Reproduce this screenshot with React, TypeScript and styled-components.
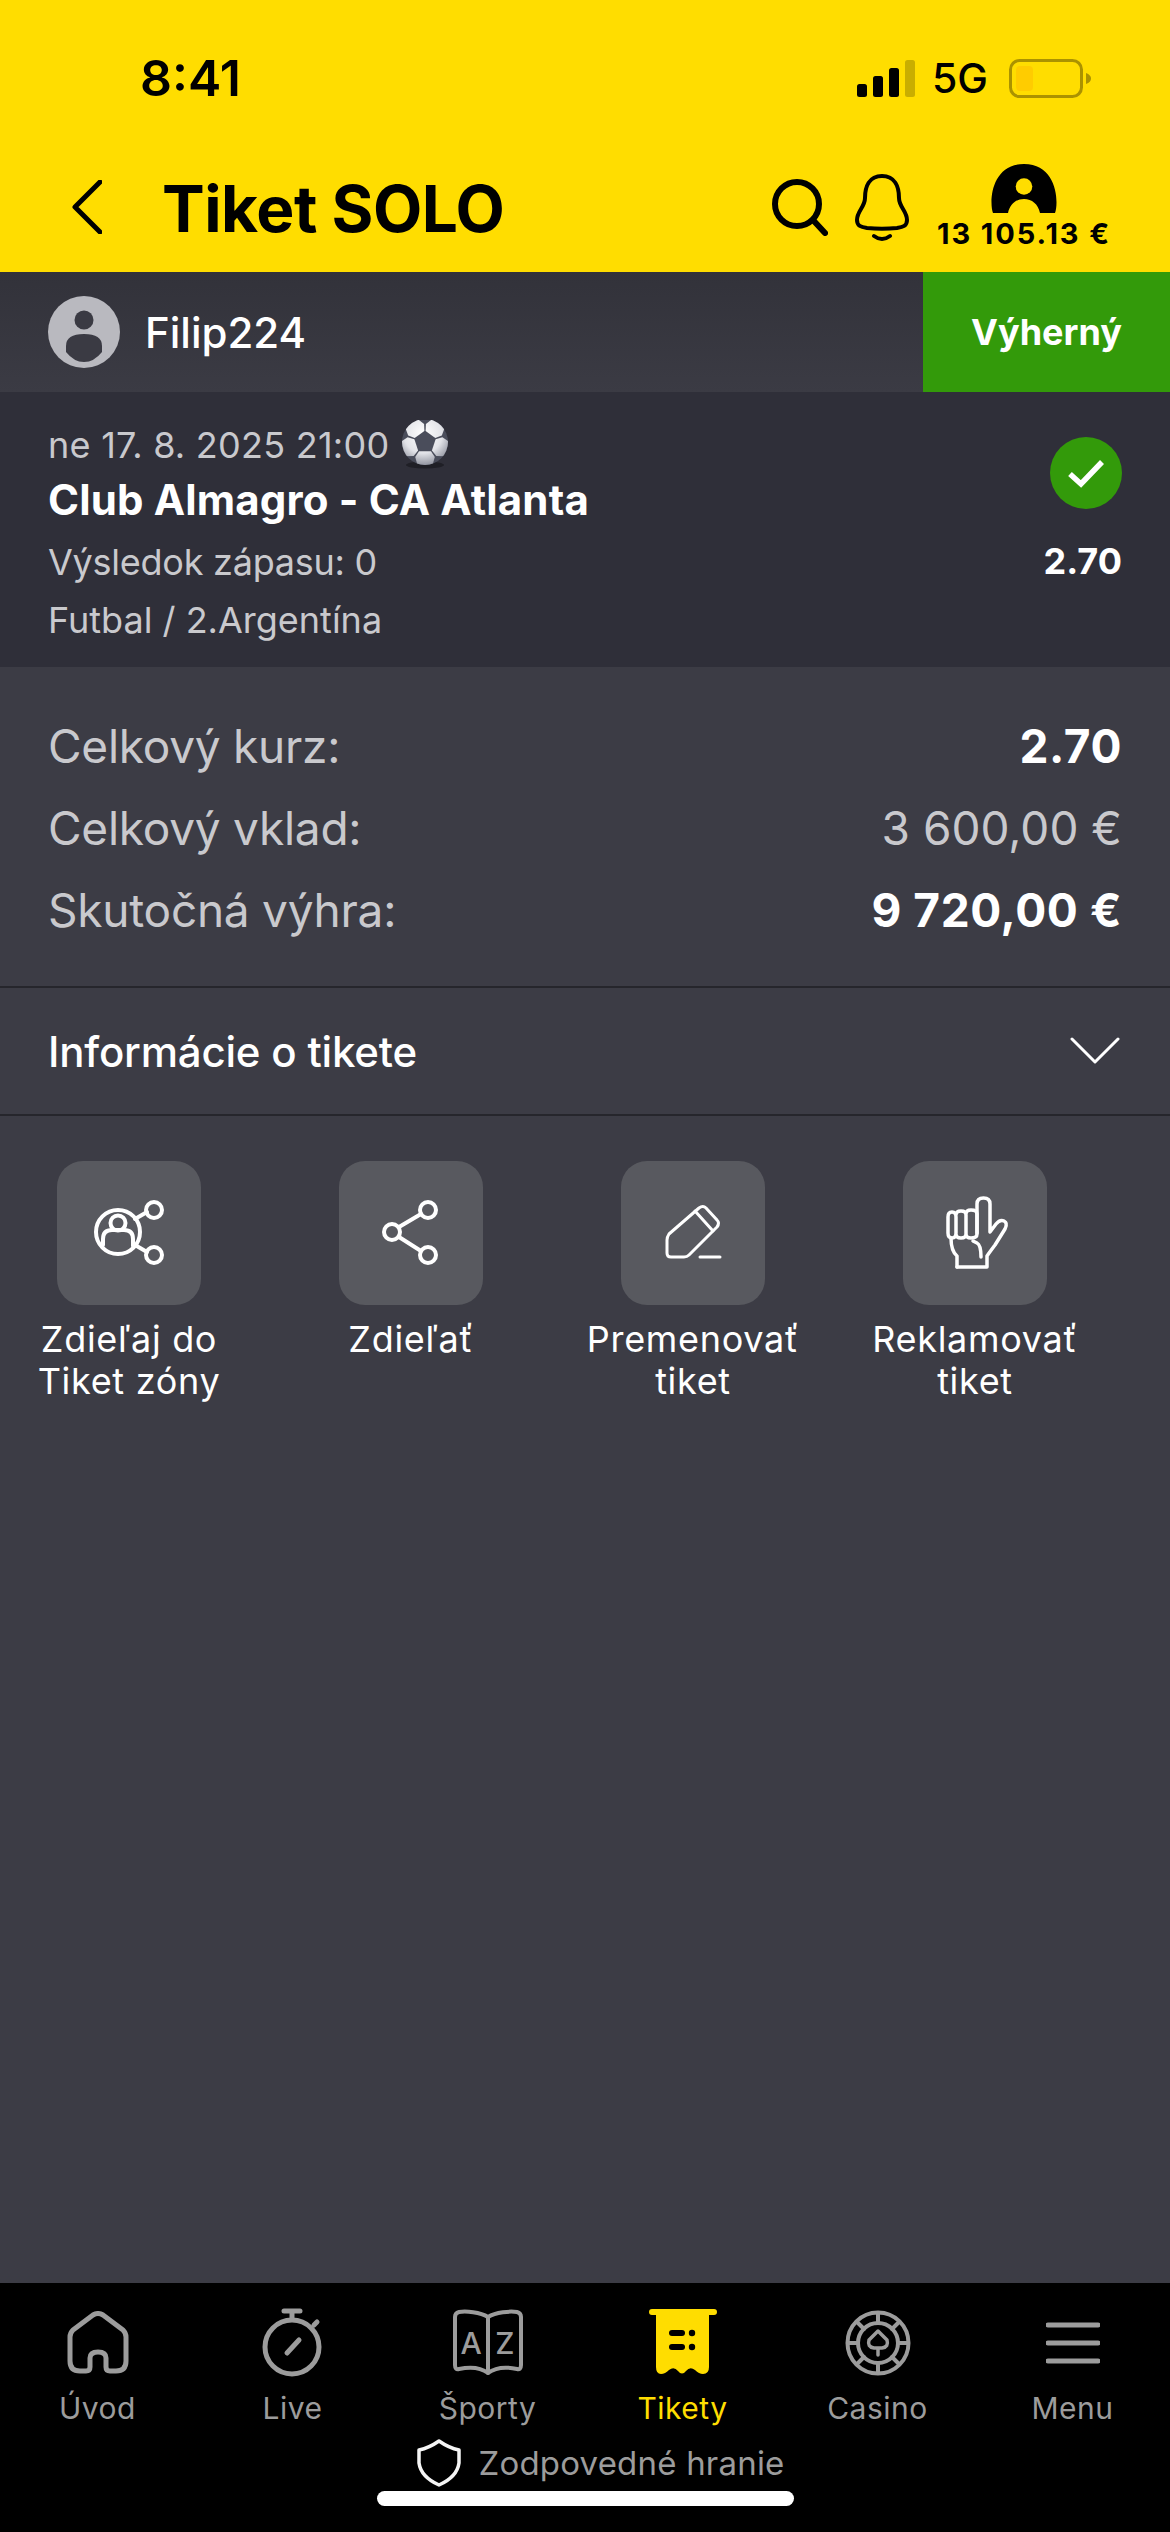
import React from 'react';
import styled, { createGlobalStyle } from 'styled-components';

const GlobalStyle = createGlobalStyle`
  html, body { margin: 0; padding: 0; background: #3c3c45; }
  * { box-sizing: border-box; }
  body { font-family: Inter, "Noto Sans", sans-serif; }
`;

const Page = styled.div`
  width: 1170px;
  height: 2532px;
  display: flex;
  flex-direction: column;
  background: #3c3c45;
  overflow: hidden;
`;

const Top = styled.header`
  height: 272px;
  background: #ffdd00;
  display: flex;
  flex-direction: column;
  color: #000;
`;

const StatusBar = styled.div`
  height: 156px;
  display: flex;
  align-items: flex-start;
  justify-content: space-between;
  padding: 48px 79px 0 140px;
`;

const Clock = styled.span`
  font-size: 50px;
  font-weight: 600;
  line-height: 60px;
`;

const StatusRight = styled.div`
  display: flex;
  align-items: center;
  gap: 21px;
  height: 60px;
`;

const NetLabel = styled.span`
  margin-left: -4px;
  font-size: 41px;
  font-weight: 500;
  line-height: 60px;
`;

const NavBar = styled.div`
  flex: 1;
  display: flex;
  align-items: flex-start;
  padding-left: 72px;
`;

const BackButton = styled.div`
  width: 90px;
  height: 60px;
  margin-top: 24px;
`;

const Title = styled.h1`
  margin: 15px 0 0;
  flex: 1;
  font-size: 64px;
  line-height: 76px;
  font-weight: 700;
  letter-spacing: -0.5px;
`;

const NavIcon = styled.div<{ $mr: number; $mt: number }>`
  margin-right: ${p => p.$mr}px;
  margin-top: ${p => p.$mt}px;
  display: flex;
`;

const Balance = styled.div`
  width: 172px;
  margin: 8px 60px 0 0;
  display: flex;
  flex-direction: column;
  align-items: center;
`;

const BalanceText = styled.span`
  font-size: 29px;
  font-weight: 700;
  line-height: 36px;
  letter-spacing: 1.9px;
  white-space: nowrap;
  margin-top: 3px;
`;

const UserRow = styled.div`
  height: 120px;
  display: flex;
  align-items: center;
  background: linear-gradient(#32323a, #3b3b44);
  padding-left: 48px;
`;

const UserName = styled.span`
  flex: 1;
  margin-left: 25px;
  font-size: 42px;
  font-weight: 500;
  color: #fff;
`;

const StatusBadge = styled.div`
  width: 247px;
  height: 120px;
  background: #339a0a;
  color: #fff;
  font-size: 36px;
  font-weight: 700;
  display: flex;
  align-items: center;
  justify-content: center;
`;

const MatchCard = styled.section`
  height: 275px;
  background: #2f2f39;
  padding: 24px 48px 0;
  display: flex;
  justify-content: space-between;
`;

const MatchInfo = styled.div`
  display: flex;
  flex-direction: column;
`;

const MatchLine = styled.div<{ $spacing?: number }>`
  display: flex;
  align-items: center;
  gap: 11px;
  font-size: 36px;
  line-height: 58px;
  letter-spacing: ${p => p.$spacing ?? 0}px;
  color: #c9c9cd;
`;

const MatchTitle = styled.div`
  font-size: 42px;
  font-weight: 700;
  line-height: 52px;
  letter-spacing: 0.15px;
  color: #fff;
  margin-bottom: 7px;
`;

const MatchOdds = styled.div`
  display: flex;
  flex-direction: column;
  align-items: flex-end;
  padding-top: 21px;
  color: #fff;
  font-size: 36px;
  font-weight: 700;
`;

const OddsValue = styled.span`
  margin-top: 30px;
`;

const Summary = styled.section`
  height: 321px;
  padding: 38px 48px 0;
  border-bottom: 2px solid #26262c;
`;

const SummaryRow = styled.div`
  height: 82px;
  display: flex;
  align-items: center;
  justify-content: space-between;
  font-size: 46px;
  letter-spacing: -0.25px;
  color: #c9c9cd;
`;

const SummaryValue = styled.span<{ $bold?: boolean }>`
  font-weight: ${p => (p.$bold ? 700 : 400)};
  letter-spacing: ${p => (p.$bold ? 0.6 : 0)}px;
  color: ${p => (p.$bold ? '#fff' : '#c9c9cd')};
`;

const InfoRow = styled.div`
  height: 128px;
  padding: 0 50px 0 48px;
  display: flex;
  align-items: center;
  justify-content: space-between;
  border-bottom: 2px solid #26262c;
  color: #fff;
  font-size: 42px;
  font-weight: 500;
  letter-spacing: -0.2px;
`;

const Actions = styled.div`
  flex: 1;
  display: grid;
  grid-template-columns: repeat(4, 282px);
  align-content: start;
  margin-left: -12px;
  padding-top: 45px;
`;

const Action = styled.div`
  display: flex;
  flex-direction: column;
  align-items: center;
  color: #fff;
  font-size: 36px;
  line-height: 42px;
  letter-spacing: 0.7px;
  text-align: center;
`;

const ActionTile = styled.div`
  width: 144px;
  height: 144px;
  border-radius: 26px;
  background: #58595f;
  margin-bottom: 13px;
  display: flex;
`;

const TabBar = styled.nav`
  height: 249px;
  background: #000;
  display: flex;
  flex-direction: column;
`;

const Tabs = styled.div`
  display: grid;
  grid-template-columns: repeat(6, 195px);
  padding-top: 22px;
`;

const Tab = styled.div<{ $active?: boolean }>`
  display: flex;
  flex-direction: column;
  align-items: center;
  color: ${p => (p.$active ? '#ffdd00' : '#9c9c9c')};
  font-size: 30px;
  line-height: 36px;
  letter-spacing: 0.5px;
`;

const TabIcon = styled.div`
  height: 76px;
  margin-bottom: 9px;
  display: flex;
  align-items: center;
  justify-content: center;
`;

const Responsible = styled.div`
  display: flex;
  align-items: center;
  justify-content: center;
  gap: 17px;
  height: 48px;
  margin-top: 13px;
  padding-left: 32px;
  color: #9c9c9c;
  font-size: 33px;
  letter-spacing: 0.2px;
`;

const HomeIndicator = styled.div`
  width: 417px;
  height: 15px;
  margin: 4px 0 0 377px;
  background: #fff;
  border-radius: 8px;
`;

const SignalIcon = () => (
  <svg width="58" height="37" viewBox="0 0 58 37">
    <rect x="0" y="24" width="10" height="13" rx="2.5" fill="#000" />
    <rect x="16" y="16" width="10" height="21" rx="2.5" fill="#000" />
    <rect x="32" y="8" width="10" height="29" rx="2.5" fill="#000" />
    <rect x="48" y="0" width="10" height="37" rx="2.5" fill="#c9ae00" />
  </svg>
);

const BatteryIcon = () => (
  <svg width="82" height="39" viewBox="0 0 82 39">
    <rect x="1.5" y="1.5" width="71" height="36" rx="9" fill="none" stroke="#ab9200" strokeWidth="3" />
    <rect x="7" y="7" width="17" height="25" rx="4" fill="#ffcc00" />
    <path d="M77 14 Q82 16 82 19.5 Q82 23 77 25 Z" fill="#ab9200" />
  </svg>
);

const BackIcon = () => (
  <svg width="30" height="54" viewBox="0 0 30 54">
    <path d="M28 2 L3 27 L28 52" fill="none" stroke="#000" strokeWidth="5" strokeLinecap="round" strokeLinejoin="round" />
  </svg>
);

const SearchIcon = () => (
  <svg width="56" height="57" viewBox="0 0 56 57">
    <circle cx="25" cy="25" r="22" fill="none" stroke="#000" strokeWidth="6" />
    <path d="M41 41 L53 54" stroke="#000" strokeWidth="6" strokeLinecap="round" />
  </svg>
);

const BellIcon = () => (
  <svg width="54" height="68" viewBox="0 0 54 68">
    <path d="M27 2 C40 2 44 13 44 24 C44 33 52 37 52 46 C52 52 48 53 42 54 C32 55 22 55 12 54 C6 53 2 52 2 46 C2 37 10 33 10 24 C10 13 14 2 27 2 Z" fill="none" stroke="#000" strokeWidth="4" />
    <path d="M19 62 Q27 68 35 62" fill="none" stroke="#000" strokeWidth="4" strokeLinecap="round" />
  </svg>
);

const AccountIcon = () => (
  <svg width="66" height="49" viewBox="0 0 66 49">
    <path d="M2 49 C-2 38 0 0 33 0 C66 0 68 38 64 49 H49 C47 40 41 35 33 35 C25 35 19 40 17 49 Z" fill="#000" />
    <circle cx="33" cy="22.5" r="8.3" fill="#ffdd00" />
  </svg>
);

const UserAvatar = () => (
  <svg width="72" height="72" viewBox="0 0 72 72">
    <circle cx="36" cy="36" r="36" fill="#b9b9bf" />
    <circle cx="36" cy="24" r="9.5" fill="#3a3a43" />
    <path d="M18 54 V50 Q18 38 36 38 Q54 38 54 50 V56 Q46 66 36 66 Q26 66 18 56 Z" fill="#3a3a43" />
  </svg>
);

const ballPoint = (r: number, deg: number) => {
  const a = (deg * Math.PI) / 180;
  return `${(25 + r * Math.cos(a)).toFixed(1)},${(22 + r * Math.sin(a)).toFixed(1)}`;
};

const ballPanel = (m: number) =>
  [ballPoint(11, m - 33), ballPoint(11, m + 33), ballPoint(18, m + 33), ballPoint(25, m + 17), ballPoint(25, m - 17), ballPoint(18, m - 33)].join(' ');

const SoccerBall = () => (
  <svg width="50" height="50" viewBox="0 0 50 50">
    <defs>
      <radialGradient id="ballLight" gradientUnits="userSpaceOnUse" cx="23" cy="14" r="32">
        <stop offset="0%" stopColor="#ffffff" />
        <stop offset="60%" stopColor="#e2e3e8" />
        <stop offset="100%" stopColor="#8d909c" />
      </radialGradient>
      <clipPath id="ballClip">
        <circle cx="25" cy="22" r="23" />
      </clipPath>
    </defs>
    <ellipse cx="25" cy="45" rx="19" ry="3.5" fill="#1f1f26" />
    <circle cx="25" cy="22" r="23" fill="#4a4d5b" />
    <g clipPath="url(#ballClip)">
      {[-54, 18, 90, 162, 234].map(m => (
        <polygon key={m} points={ballPanel(m)} fill="url(#ballLight)" />
      ))}
    </g>
  </svg>
);

const CheckBadge = () => (
  <svg width="72" height="72" viewBox="0 0 72 72">
    <circle cx="36" cy="36" r="36" fill="#339a0a" />
    <path d="M20 37 L31 47 L52 25" fill="none" stroke="#fff" strokeWidth="5.5" />
  </svg>
);

const ChevronDown = () => (
  <svg width="50" height="28" viewBox="0 0 50 28">
    <path d="M2 2 L25 25 L48 2" fill="none" stroke="#fff" strokeWidth="3" strokeLinecap="round" strokeLinejoin="round" />
  </svg>
);

const TileSvg = styled.svg.attrs({ width: 144, height: 144, viewBox: '0 0 144 144' })`
  fill: none;
  stroke: #fff;
  stroke-width: 4;
  stroke-linecap: round;
  stroke-linejoin: round;
`;

const ZoneIcon = () => (
  <TileSvg>
    <circle cx="61" cy="71" r="22" />
    <circle cx="61" cy="62" r="7.5" />
    <path d="M46 84 V78 Q46 69 55 69 H67 Q76 69 76 78 V85" />
    <path d="M78 58 L90 51 M78 84 L90 91" />
    <circle cx="97" cy="49" r="8" />
    <circle cx="97" cy="94" r="8" />
  </TileSvg>
);

const ShareIcon = () => (
  <TileSvg>
    <circle cx="53" cy="71" r="8" />
    <circle cx="89" cy="49" r="8" />
    <circle cx="89" cy="94" r="8" />
    <path d="M60 66 L82 53 M60 76 L82 90" />
  </TileSvg>
);

const RenameIcon = () => (
  <TileSvg>
    <path d="M46 92 V79 Q46 76 48 73 L78 47 Q82 44 85 47 L96 59 Q99 62 96 66 L68 94 Q66 96 63 96 H50 Q46 96 46 92 Z" strokeWidth="3" />
    <path d="M74 50 L92 70" strokeWidth="3" />
    <path d="M79 96 H99" strokeWidth="3" />
  </TileSvg>
);

const ClaimIcon = () => (
  <TileSvg>
    <path d="M54 106 H84 V95 Q86 92 92 84 L102 68 Q105 62 101 60 Q97 58 93 63 L87 71 V43 Q87 37 80.5 37 Q74 37 74 43 V72" strokeWidth="3.5" />
    <path d="M78 96 Q78 84 74 82 L70 80 M54 106 V95 Q48 90 48 77" strokeWidth="3.5" />
    <path d="M45 56 Q45 51 49 51 Q53 51 53 56 V72 Q53 77 49 77 Q45 77 45 72 Z M53 54 Q53 50 58 50 Q63 50 63 54 V73 Q63 77 58 77 Q53 77 53 73 M63 53 Q63 49 68 49 Q74 49 74 53 V73 Q74 77 68 77 Q63 77 63 73" strokeWidth="3.5" />
  </TileSvg>
);

const TabSvg = styled.svg`
  fill: none;
  stroke: #9c9c9c;
  stroke-width: 5;
  stroke-linecap: round;
  stroke-linejoin: round;
`;

const HomeIcon = () => (
  <TabSvg width="62" height="64" viewBox="0 0 62 64">
    <path d="M13 60 H19 Q23 60 23 56 V47 Q23 41 31 41 Q39 41 39 47 V56 Q39 60 43 60 H49 Q59 60 59 50 V26 Q59 22 56 19 L36 4 Q31 1 26 4 L6 19 Q3 22 3 26 V50 Q3 60 13 60 Z" />
  </TabSvg>
);

const LiveIcon = () => (
  <TabSvg width="62" height="70" viewBox="0 0 62 70">
    <circle cx="30" cy="39" r="27" />
    <path d="M30 3 V11 M22 3 H38 M52 17 L55 14 M25 45 L37 32" />
  </TabSvg>
);

const BookLetter = styled.text`
  font-family: Inter, sans-serif;
  font-size: 30px;
  font-weight: 500;
  fill: #9c9c9c;
  stroke: none;
  text-anchor: middle;
`;

const SportsIcon = () => (
  <TabSvg width="72" height="68" viewBox="0 0 72 68">
    <path d="M36 8 C28 3 14 2 7 3 Q3 4 3 8 V56 Q3 61 7 60 C16 58 28 58 36 64 C44 58 56 58 65 60 Q69 61 69 56 V8 Q69 4 65 3 C58 2 44 3 36 8 Z" strokeWidth="4" />
    <path d="M36 8 V64" strokeWidth="4" />
    <BookLetter x="19.5" y="45">A</BookLetter>
    <BookLetter x="53" y="45">Z</BookLetter>
  </TabSvg>
);

const TicketsIcon = () => (
  <svg width="68" height="68" viewBox="0 0 68 68">
    <path d="M3 0 H65 Q68 0 68 3 Q68 6 65 6 H60 V58 Q60 65 54 65 Q50 65 46 61 Q41 57 37 62 Q33 67 29 62 Q25 57 20 61 Q16 65 12 65 Q7 65 7 58 V6 H3 Q0 6 0 3 Q0 0 3 0 Z" fill="#ffdd00" />
    <rect x="20" y="21" width="16" height="6" rx="3" fill="#000" />
    <rect x="20" y="35" width="16" height="6" rx="3" fill="#000" />
    <circle cx="43" cy="24" r="3.2" fill="#000" />
    <circle cx="43" cy="38" r="3.2" fill="#000" />
  </svg>
);

const CasinoIcon = () => (
  <TabSvg width="66" height="66" viewBox="0 0 66 66">
    <circle cx="33" cy="33" r="30.5" strokeWidth="4" />
    <circle cx="33" cy="33" r="20" strokeWidth="4" />
    <path d="M33 3 V13 M33 53 V63 M3 33 H13 M53 33 H63 M12 12 L19 19 M54 12 L47 19 M12 54 L19 47 M54 54 L47 47" strokeWidth="4" />
    <path d="M33 21 L42 30 Q44 37 37 38 H29 Q22 37 24 30 Z M33 38 V45" strokeWidth="3.5" />
  </TabSvg>
);

const MenuIcon = () => (
  <TabSvg width="54" height="42" viewBox="0 0 54 42">
    <path d="M2 3 H52 M2 21 H52 M2 39 H52" />
  </TabSvg>
);

const ShieldIcon = () => (
  <svg width="44" height="48" viewBox="0 0 44 48">
    <path d="M22 2 Q32 9 42 11 V24 Q40 38 22 46 Q4 38 2 24 V11 Q12 9 22 2 Z" fill="none" stroke="#f5f5f5" strokeWidth="3.5" strokeLinejoin="round" />
  </svg>
);

const actions = [
  { icon: <ZoneIcon />, label: ['Zdieľaj do', 'Tiket zóny'] },
  { icon: <ShareIcon />, label: ['Zdieľať'] },
  { icon: <RenameIcon />, label: ['Premenovať', 'tiket'] },
  { icon: <ClaimIcon />, label: ['Reklamovať', 'tiket'] },
];

const tabs = [
  { icon: <HomeIcon />, label: 'Úvod' },
  { icon: <LiveIcon />, label: 'Live' },
  { icon: <SportsIcon />, label: 'Športy' },
  { icon: <TicketsIcon />, label: 'Tikety', active: true },
  { icon: <CasinoIcon />, label: 'Casino' },
  { icon: <MenuIcon />, label: 'Menu' },
];

export default function App() {
  return (
    <Page>
      <GlobalStyle />
      <Top>
        <StatusBar>
          <Clock>8:41</Clock>
          <StatusRight>
            <SignalIcon />
            <NetLabel>5G</NetLabel>
            <BatteryIcon />
          </StatusRight>
        </StatusBar>
        <NavBar>
          <BackButton><BackIcon /></BackButton>
          <Title>Tiket SOLO</Title>
          <NavIcon $mr={27} $mt={23}><SearchIcon /></NavIcon>
          <NavIcon $mr={29} $mt={18}><BellIcon /></NavIcon>
          <Balance>
            <AccountIcon />
            <BalanceText>13 105.13 €</BalanceText>
          </Balance>
        </NavBar>
      </Top>
      <UserRow>
        <UserAvatar />
        <UserName>Filip224</UserName>
        <StatusBadge>Výherný</StatusBadge>
      </UserRow>
      <MatchCard>
        <MatchInfo>
          <MatchLine $spacing={0.25}>ne 17. 8. 2025 21:00 <SoccerBall /></MatchLine>
          <MatchTitle>Club Almagro - CA Atlanta</MatchTitle>
          <MatchLine $spacing={-0.25}>Výsledok zápasu: 0</MatchLine>
          <MatchLine>Futbal / 2.Argentína</MatchLine>
        </MatchInfo>
        <MatchOdds>
          <CheckBadge />
          <OddsValue>2.70</OddsValue>
        </MatchOdds>
      </MatchCard>
      <Summary>
        <SummaryRow>Celkový kurz:<SummaryValue $bold>2.70</SummaryValue></SummaryRow>
        <SummaryRow>Celkový vklad:<SummaryValue>3 600,00 €</SummaryValue></SummaryRow>
        <SummaryRow>Skutočná výhra:<SummaryValue $bold>9 720,00 €</SummaryValue></SummaryRow>
      </Summary>
      <InfoRow>
        Informácie o tikete
        <ChevronDown />
      </InfoRow>
      <Actions>
        {actions.map(a => (
          <Action key={a.label[0]}>
            <ActionTile>{a.icon}</ActionTile>
            {a.label.map(l => <span key={l}>{l}</span>)}
          </Action>
        ))}
      </Actions>
      <TabBar>
        <Tabs>
          {tabs.map(t => (
            <Tab key={t.label} $active={t.active}>
              <TabIcon>{t.icon}</TabIcon>
              {t.label}
            </Tab>
          ))}
        </Tabs>
        <Responsible>
          <ShieldIcon />
          Zodpovedné hranie
        </Responsible>
        <HomeIndicator />
      </TabBar>
    </Page>
  );
}
